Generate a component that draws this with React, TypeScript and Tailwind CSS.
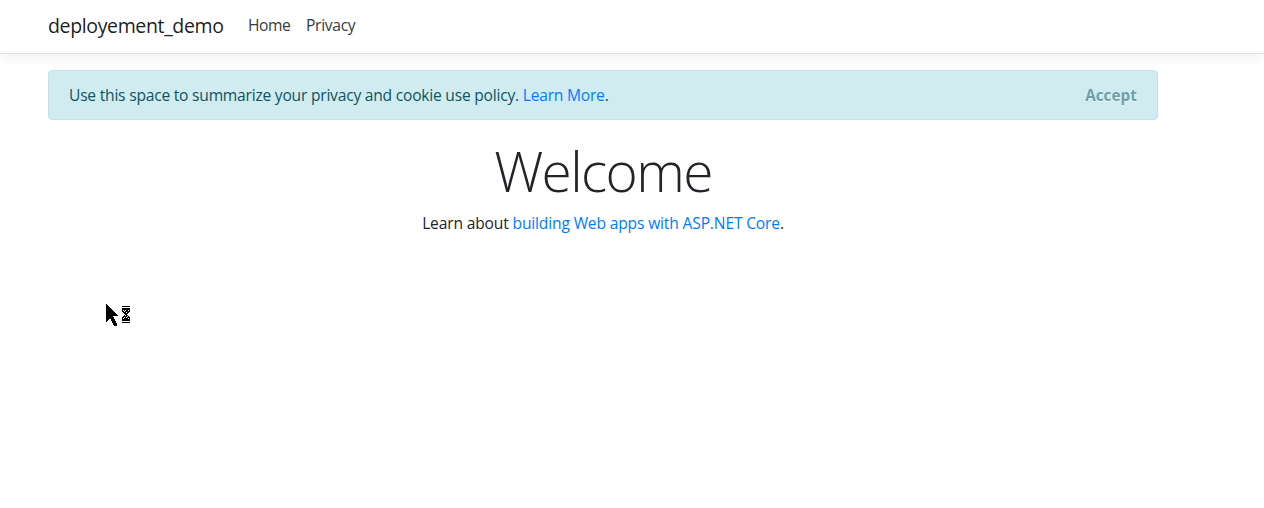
import React from "react";

export default function App() {
  return (
    <div className="relative h-[508px] w-full overflow-hidden bg-white font-['Open_Sans','Noto_Sans',sans-serif] text-[15.6px] leading-6 text-[#212529]">
      <header className="mb-4 flex h-[54px] items-center border-b border-[#dee2e6] bg-white pl-12 shadow-[0_4px_12px_rgba(0,0,0,0.05)]">
        <a className="w-[176px] pb-0.5 text-[19.5px] tracking-[-0.36px] whitespace-nowrap text-black/90">deployement_demo</a>
        <nav className="ml-6 flex gap-4 pb-[3px] text-[#343a40]">
          <a className="w-[42px] tracking-[-0.4px]">Home</a>
          <a className="tracking-[-0.3px]">Privacy</a>
        </nav>
      </header>
      <main className="ml-12 w-[1110px]">
        <div className="mb-4 flex h-[50px] items-center justify-between rounded border border-[#bee5eb] bg-[#d1ecf1] px-5 text-[#0c5460]">
          <p className="tracking-[-0.22px]">Use this space to summarize your privacy and cookie use policy. <a className="text-[#007bff]">Learn More</a>.</p>
          <button className="text-[15.2px] font-bold tracking-[0.1px] opacity-50 [text-shadow:0_1px_0_#fff]">Accept</button>
        </div>
        <div className="text-center">
          <h1 className="mb-[7px] pt-px text-[55px] font-light leading-[67px] tracking-[-1.6px]">Welcome</h1>
          <p className="tracking-[-0.16px]">Learn about <a className="text-[#007bff]">building Web apps with ASP.NET Core</a>.</p>
        </div>
      </main>
      <svg className="absolute left-[106px] top-[304px]" width="26" height="22" shapeRendering="crispEdges">
        <path d="M0 0L12 12H7L11 20V22H8L4 14L0 18Z" />
        <path d="M16 2h8v1h-8zM16 4h8v4h-1v1h-1v1h-1v1h1v1h1v1h1v4h-8v-4h1v-1h1v-1h1v-1h-1v-1h-1v-1h-1zM16 18h8v1h-8z" />
        <path fill="white" d="M17 6h1v1h-1zM19 6h1v1h-1zM22 6h1v1h-1zM18 7h1v1h-1zM20 8h1v1h-1zM19 11h1v1h-1zM21 12h1v1h-1zM18 13h1v1h-1zM20 13h1v1h-1zM17 14h1v1h-1zM22 14h1v1h-1z" />
      </svg>
    </div>
  );
}
